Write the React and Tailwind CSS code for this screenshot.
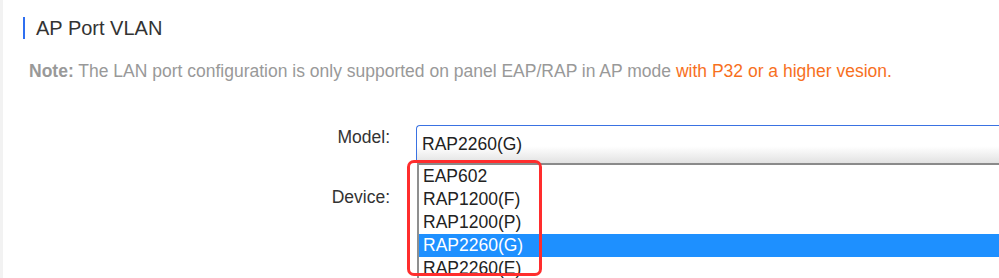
import React from 'react';

const options = ['EAP602', 'RAP1200(F)', 'RAP1200(P)', 'RAP2260(G)', 'RAP2260(E)'];

export default function App() {
  const selected = 'RAP2260(G)';

  return (
    <div
      className="relative flex h-[278px] w-[999px] overflow-hidden bg-white"
      style={{ fontFamily: '"Liberation Sans", Arial, sans-serif' }}
    >
      <div className="w-[3px] shrink-0 bg-[#f2f2f2]" />

      <div className="flex-1">
        {/* section title */}
        <div className="mt-[17px] ml-[20px] flex items-center">
          <div className="h-[22px] w-[2px] bg-[#2f6ff0]" />
          <h2 className="ml-[11px] text-[20px] leading-[22px] text-[#333]">AP Port VLAN</h2>
        </div>

        {/* note */}
        <p className="mt-[22px] ml-[26px] text-[17.5px] leading-[20px] text-[#999] whitespace-nowrap">
          <span className="font-bold">Note:</span> The LAN port configuration is only supported on panel EAP/RAP in AP mode{' '}
          <span className="text-[#f7701e]">with P32 or a higher vesion.</span>
        </p>

        {/* form */}
        <div className="mt-[44px] text-[17.5px]">
          <div className="flex">
            <label className="w-[387px] pt-[2px] text-right leading-[20px] text-[#333]">Model:</label>
            <div className="relative ml-[26px] w-[700px]">
              <div className="flex h-[38px] items-center rounded-tl-[4px] border-t border-l border-[#3a72e2] bg-linear-to-b from-white from-55% to-[#e2e2e2] pl-[5px] text-[#222]">
                {selected}
              </div>
              <ul className="absolute top-full left-[1px] right-0 z-10 border-t-2 border-l-2 border-t-[#8a8a8a] border-l-[#8f8f8f] bg-white">
                {options.map((o) => (
                  <li
                    key={o}
                    className={
                      'h-[23px] pl-[4px] leading-[23px] ' +
                      (o === selected ? 'bg-[#1e90ff] text-white' : 'text-[#222]')
                    }
                  >
                    {o}
                  </li>
                ))}
              </ul>
            </div>
          </div>

          <div className="mt-[22px] flex">
            <label className="w-[387px] pt-[2px] text-right leading-[20px] text-[#333]">Device:</label>
          </div>
        </div>
      </div>

      {/* annotation */}
      <div className="pointer-events-none absolute top-[160px] left-[407px] z-20 h-[116px] w-[135px] rounded-[7px] border-[3px] border-[#ff2d2d]" />
    </div>
  );
}
